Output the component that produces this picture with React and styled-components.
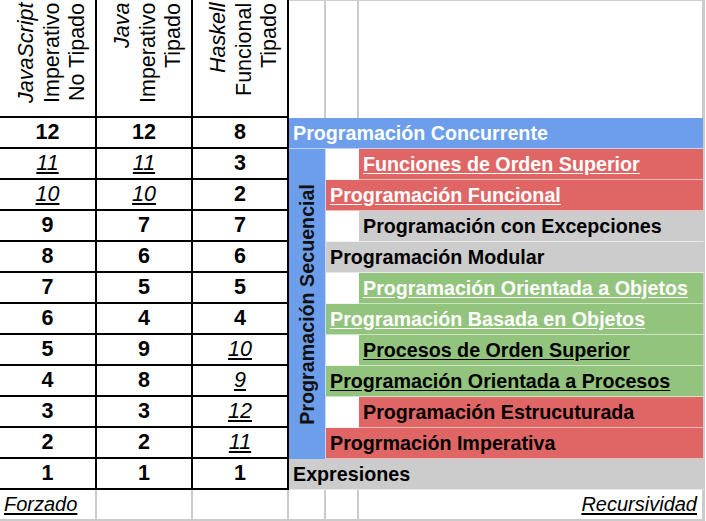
import React from 'react';
import styled, { createGlobalStyle, css } from 'styled-components';

const GlobalStyle = createGlobalStyle`
  html, body {
    margin: 0;
    padding: 0;
    background: #ffffff;
  }
  body {
    font-family: "Liberation Sans", Arial, sans-serif;
    color: #000;
  }
`;

const tones = {
  blue: '#6d9eeb',
  red: '#e06666',
  green: '#93c47d',
  gray: '#cccccc',
};

const Sheet = styled.div`
  display: grid;
  grid-template-columns: 97px 96px 96px 37px 33px 346px;
  grid-template-rows: 118px repeat(12, 31px) 31px;
  width: 705px;
`;

// left part: language headers
const HeadCell = styled.div`
  display: flex;
  justify-content: center;
  padding-left: 9px;
  border-right: 2px solid #000;
  border-bottom: 2px solid #000;
`;

const HeadText = styled.div`
  writing-mode: vertical-rl;
  transform: rotate(180deg);
  text-align: end;
  font-size: 21.5px;
  line-height: 25.5px;
  padding: 3px 0;
  white-space: nowrap;
`;

const HeadLine = styled.span`
  display: block;
  font-style: ${({ $italic }) => ($italic ? 'italic' : 'normal')};
`;

const NumCell = styled.div`
  display: flex;
  align-items: center;
  justify-content: center;
  font-size: 21.5px;
  border-right: 2px solid #000;
  border-bottom: 2px solid #000;
  ${({ $em }) =>
    $em
      ? css`
          font-style: italic;
          text-decoration: underline;
          text-underline-offset: 2px;
        `
      : css`
          font-weight: bold;
        `}
`;

// right part: paradigms
const BlankHead = styled.div`
  border-top: 1px solid #cfcfcf;
  border-right: ${({ $last }) => ($last ? '3px' : '2px')} solid #cbcbcb;
`;

const Band = styled.div`
  grid-column: span ${({ $span }) => $span || 1};
  display: flex;
  align-items: center;
  padding-left: 4px;
  background: ${({ $tone }) => tones[$tone]};
  color: ${({ $ink }) => $ink || '#000'};
  font-size: 19.7px;
  font-weight: bold;
  white-space: nowrap;
  border-bottom: 1px solid rgba(255, 255, 255, 0.55);
  border-right: 2px solid #cbcbcb;
  ${({ $link }) =>
    $link &&
    css`
      text-decoration: underline;
      text-underline-offset: 2px;
    `}
`;

const Indent = styled.div`
  background: #ffffff;
  border-bottom: 1px solid #f4f4f4;
`;

const SideBand = styled.div`
  grid-column: 4;
  grid-row: 3 / span 10;
  display: flex;
  align-items: center;
  justify-content: center;
  background: ${tones.blue};
  border-right: 1px solid rgba(255, 255, 255, 0.6);
`;

const SideText = styled.span`
  writing-mode: vertical-rl;
  transform: rotate(180deg);
  font-size: 19.7px;
  font-weight: bold;
  color: #111;
  white-space: nowrap;
`;

// bottom row
const FootCell = styled.div`
  display: flex;
  align-items: center;
  justify-content: ${({ $right }) => ($right ? 'flex-end' : 'flex-start')};
  padding: 0 5px 0 4px;
  font-size: 20px;
  font-style: italic;
  border-right: ${({ $last }) => ($last ? '3px' : '2px')} solid #cbcbcb;
  border-bottom: 2px solid #cbcbcb;
`;

const FootLink = styled.span`
  text-decoration: underline;
  text-underline-offset: 2px;
`;

const languages = [
  ['JavaScript', 'Imperativo', 'No Tipado'],
  ['Java', 'Imperativo', 'Tipado'],
  ['Haskell', 'Funcional', 'Tipado'],
];

const n = (v) => ({ v });
const e = (v) => ({ v, em: true });

const scores = [
  [n(12), n(12), n(8)],
  [e(11), e(11), n(3)],
  [e(10), e(10), n(2)],
  [n(9), n(7), n(7)],
  [n(8), n(6), n(6)],
  [n(7), n(5), n(5)],
  [n(6), n(4), n(4)],
  [n(5), n(9), e(10)],
  [n(4), n(8), e(9)],
  [n(3), n(3), e(12)],
  [n(2), n(2), e(11)],
  [n(1), n(1), n(1)],
];

const bands = [
  { text: 'Programación Concurrente', tone: 'blue', ink: '#fff', span: 3 },
  { text: 'Funciones de Orden Superior', tone: 'red', ink: '#fff', link: true, indent: true },
  { text: 'Programación Funcional', tone: 'red', ink: '#fff', link: true },
  { text: 'Programación con Excepciones', tone: 'gray', indent: true },
  { text: 'Programación Modular', tone: 'gray' },
  { text: 'Programación Orientada a Objetos', tone: 'green', ink: '#fff', link: true, indent: true },
  { text: 'Programación Basada en Objetos', tone: 'green', ink: '#fff', link: true },
  { text: 'Procesos de Orden Superior', tone: 'green', link: true, indent: true },
  { text: 'Programación Orientada a Procesos', tone: 'green', link: true },
  { text: 'Programación Estrucuturada', tone: 'red', indent: true },
  { text: 'Progrmación Imperativa', tone: 'red' },
  { text: 'Expresiones', tone: 'gray', span: 3 },
];

const App = () => {
  return (
    <>
      <GlobalStyle />
      <Sheet>
        {languages.map(([name, kind, typing]) => (
          <HeadCell key={name}>
            <HeadText>
              <HeadLine $italic>{name}</HeadLine>
              <HeadLine>{kind}</HeadLine>
              <HeadLine>{typing}</HeadLine>
            </HeadText>
          </HeadCell>
        ))}
        <BlankHead />
        <BlankHead />
        <BlankHead $last />

        <SideBand>
          <SideText>Programación Secuencial</SideText>
        </SideBand>

        {scores.map((row, i) => {
          const band = bands[i];
          return (
            <React.Fragment key={i}>
              {row.map((cell, j) => (
                <NumCell key={j} $em={cell.em}>
                  {cell.v}
                </NumCell>
              ))}
              {band.indent && <Indent />}
              <Band
                $tone={band.tone}
                $ink={band.ink}
                $link={band.link}
                $span={band.span || (band.indent ? 1 : 2)}
              >
                {band.text}
              </Band>
            </React.Fragment>
          );
        })}

        <FootCell>
          <FootLink>Forzado</FootLink>
        </FootCell>
        <FootCell />
        <FootCell />
        <FootCell />
        <FootCell />
        <FootCell $right $last>
          <FootLink>Recursividad</FootLink>
        </FootCell>
      </Sheet>
    </>
  );
};

export default App;
